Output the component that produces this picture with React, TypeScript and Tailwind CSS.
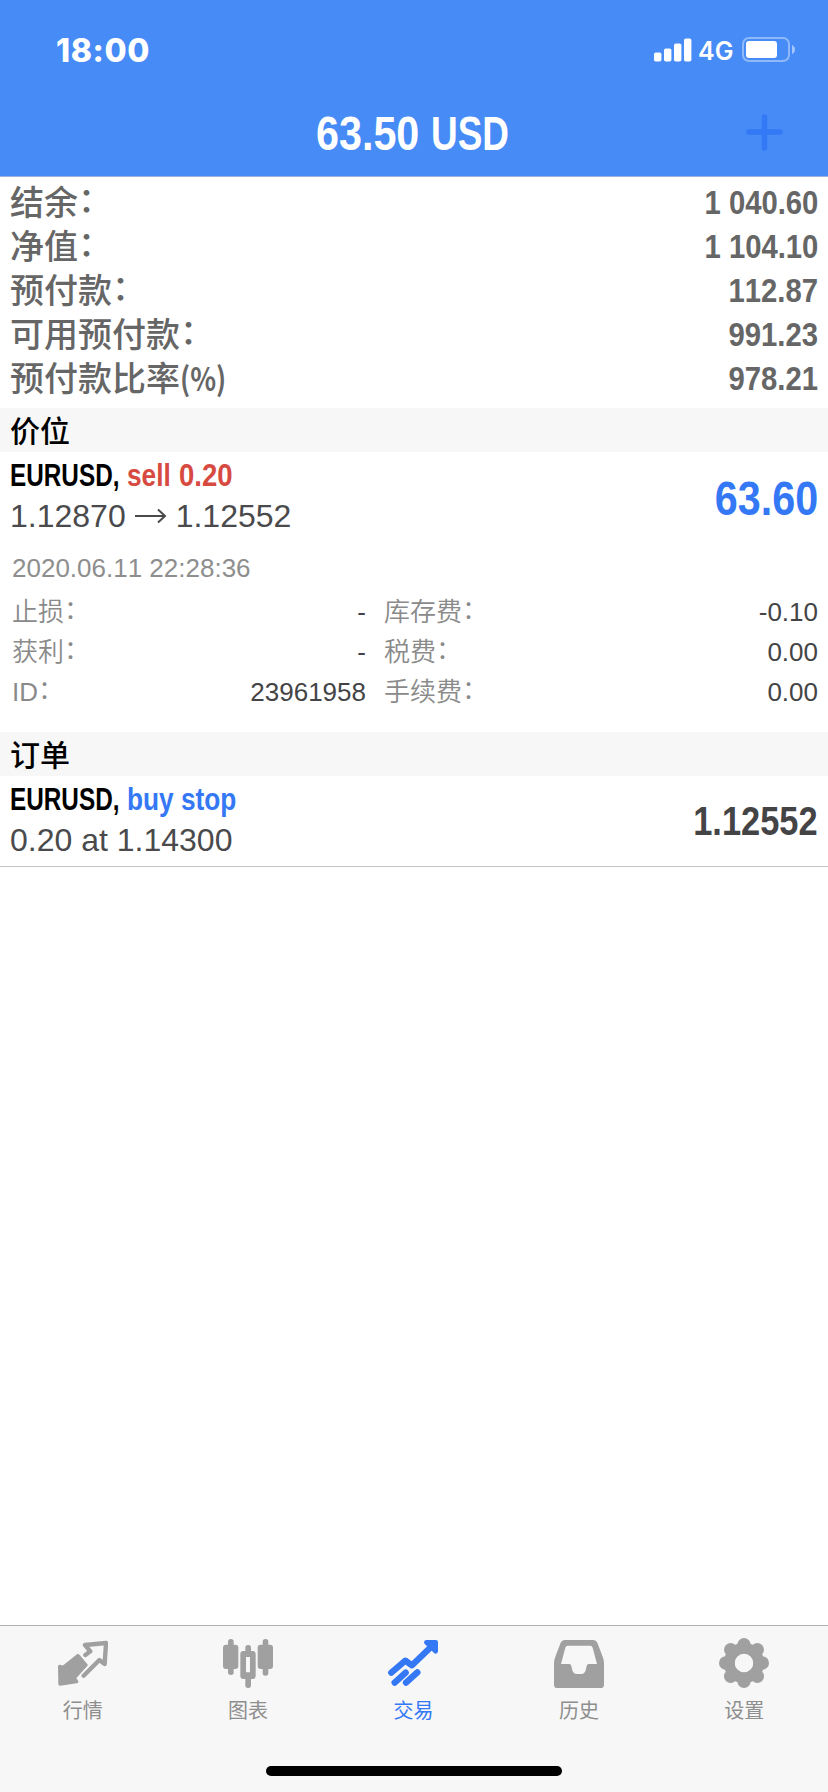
import React from "react";

type Row = {
  label: string;
  value: string;
};

const summary: Row[] = [
  { label: "结余", value: "1 040.60" },
  { label: "净值", value: "1 104.10" },
  { label: "预付款", value: "112.87" },
  { label: "可用预付款", value: "991.23" },
  { label: "预付款比率", value: "978.21" },
];

const detailsLeft: Row[] = [
  { label: "止损", value: "-" },
  { label: "获利", value: "-" },
  { label: "ID", value: "23961958" },
];

const detailsRight: Row[] = [
  { label: "库存费", value: "-0.10" },
  { label: "税费", value: "0.00" },
  { label: "手续费", value: "0.00" },
];

const QuotesIcon = () => (
  <svg className="size-[50px]" viewBox="0 0 150 150" strokeLinejoin="round" strokeLinecap="round">
    <path
      d="M5 85 L16 88 L60 53 L84 81 L49 120 L56 131 L6 138 Z"
      fill="currentColor"
      stroke="currentColor"
      strokeWidth="10"
    />
    <path
      d="M82 51 L97 40 L81 21 L144 15 L140 78 L124 66 L77 113"
      fill="none"
      stroke="currentColor"
      strokeWidth="13"
    />
  </svg>
);

const ChartIcon = () => (
  <svg className="size-[50px]" viewBox="0 0 150 150" fill="currentColor">
    <rect x="15" y="3" width="17" height="108" rx="8" />
    <rect x="0" y="20" width="46" height="73" rx="9" />
    <rect x="119" y="3" width="17" height="110" rx="8" />
    <rect x="104" y="20" width="46" height="73" rx="9" />
    <rect x="67" y="21" width="17" height="25" rx="8" />
    <rect x="67" y="112" width="17" height="38" rx="8" />
    <path
      fillRule="evenodd"
      d="M61 39h28q9 0 9 9v66q0 9-9 9H61q-9 0-9-9V48q0-9 9-9zM69 57v46h12V57z"
    />
  </svg>
);

const TradeIcon = () => (
  <svg
    className="size-[50px]"
    viewBox="0 0 150 150"
    fill="none"
    stroke="currentColor"
    strokeWidth="19"
    strokeLinejoin="round"
    strokeLinecap="round"
  >
    <path d="M10 104 L52 68 L72 82 L132 24" />
    <path d="M20 134 L53 104 M54 134 L88 103" />
    <path d="M115 13 H143 V40 Z" fill="currentColor" strokeWidth="14" />
  </svg>
);

const HistoryIcon = () => (
  <svg className="size-[50px]" viewBox="0 0 150 150" fill="currentColor">
    <path
      fillRule="evenodd"
      d="M32 6H118Q127 6 130 14L146 56Q150 66 150 75V140Q150 150 140 150H10Q0 150 0 140V75Q0 66 4 56L20 14Q23 6 32 6ZM41 23Q36 23 34 29L21 78H46Q51 78 52 84L55 97Q58 108 68 108H82Q92 108 95 97L98 84Q99 78 104 78H129L116 29Q114 23 109 23Z"
    />
  </svg>
);

const SettingsIcon = () => (
  <svg className="size-[50px]" viewBox="0 0 150 150" fill="currentColor">
    <circle cx="75" cy="75" r="44" fill="none" stroke="currentColor" strokeWidth="33" />
    <circle cx="75" cy="20" r="20" />
    <circle cx="75" cy="130" r="20" />
    <circle cx="20" cy="75" r="20" />
    <circle cx="130" cy="75" r="20" />
    <circle cx="35" cy="35" r="20" />
    <circle cx="115" cy="35" r="20" />
    <circle cx="35" cy="115" r="20" />
    <circle cx="115" cy="115" r="20" />
    <circle cx="75" cy="75" r="27" fill="#f7f7f7" />
  </svg>
);

const tabs = [
  { name: "行情", icon: <QuotesIcon /> },
  { name: "图表", icon: <ChartIcon /> },
  { name: "交易", icon: <TradeIcon />, active: true },
  { name: "历史", icon: <HistoryIcon /> },
  { name: "设置", icon: <SettingsIcon /> },
];

const StatusBar = () => (
  <div className="flex h-[100px] items-center justify-between pr-[32px] pl-[56px] text-white">
    <span className="pt-px font-[Inter,sans-serif] text-[32px] leading-none font-extrabold tracking-[0.6px]">18:00</span>
    <div className="flex items-center">
      <svg width="38" height="24" viewBox="0 0 38 24" fill="white">
        <rect x="0" y="14.5" width="7.4" height="9" rx="1.8" />
        <rect x="10" y="10.5" width="7.4" height="13" rx="1.8" />
        <rect x="20" y="5.5" width="7.4" height="18" rx="1.8" />
        <rect x="30" y="0.5" width="7.4" height="23" rx="1.8" />
      </svg>
      <span className="ml-[6px] w-[44px] pt-[3px] font-[Inter,sans-serif] text-[25px] leading-none font-semibold">4G</span>
      <svg width="54" height="26" viewBox="0 0 54 26">
        <rect x="1" y="1" width="46" height="23" rx="6" fill="none" stroke="white" strokeOpacity="0.4" strokeWidth="2" />
        <rect x="4" y="4" width="31" height="17" rx="3" fill="white" />
        <path d="M50 8 Q53 9.500 53 12.500 Q53 15.500 50 17 Z" fill="white" fillOpacity="0.5" />
      </svg>
    </div>
  </div>
);

const SectionTitle = ({ children }: { children: React.ReactNode }) => (
  <div className="flex h-11 items-center bg-[#f7f7f7] pb-[2px] pl-[10px] font-['Noto_Sans_CJK_SC',sans-serif] text-[30px] leading-none font-medium text-black">
    {children}
  </div>
);

const DetailColumn = ({ rows }: { rows: Row[] }) => (
  <>
    {rows.map((row) => (
      <div key={row.label} className="flex h-10 items-center justify-between text-[26px] leading-10">
        <span className="flex font-['Liberation_Sans','Noto_Sans_CJK_SC',sans-serif] font-[350] text-[#8a8a8a]">
          {row.label}
          <span className="-translate-y-[2px]">：</span>
        </span>
        <span className="text-[#444446]">{row.value}</span>
      </div>
    ))}
  </>
);

const App: React.FC = () => {
  return (
    <div className="flex h-[1792px] w-[828px] flex-col overflow-hidden bg-white font-['Liberation_Sans',Arial,sans-serif] [font-kerning:none]">
      <header className="h-[177px] border-b border-[#9bb0dc] bg-[#468bf6]">
        <StatusBar />
        <div className="grid h-[66px] grid-cols-[316px_1fr_83px] items-center">
          <span />
          <h1 className="flex pt-px text-[48px] leading-none font-bold whitespace-nowrap text-white">
            <span className="w-[115px] origin-left scale-x-[0.86]">63.50</span>
            <span className="w-[80px] origin-left scale-x-[0.77]">USD</span>
          </h1>
          <svg width="38" height="38" viewBox="0 0 38 38" stroke="#3378f5" strokeWidth="5.5" strokeLinecap="round">
            <path d="M19.500 3 V34 M4 18 H35" />
          </svg>
        </div>
      </header>

      <section className="h-[231px] px-[10px] pt-[3px] text-[#666666]">
        {summary.map((row, index) => (
          <div key={row.label} className="flex h-11 items-center justify-between text-[34px] leading-[44px]">
            <span className="flex -translate-y-px font-['Noto_Sans_CJK_SC',sans-serif] font-medium">
              {row.label}
              {index === summary.length - 1 ? (
                <span className="origin-left scale-x-[0.84] text-[32px] font-bold">(%)</span>
              ) : (
                <span className="-translate-y-[3px]">：</span>
              )}
            </span>
            <span className="origin-right scale-x-[0.86] font-bold">{row.value}</span>
          </div>
        ))}
      </section>

      <SectionTitle>价位</SectionTitle>
      <section className="h-[280px] px-[10px] pt-[7px]">
        <div className="flex h-[80px] items-start justify-between">
          <div>
            <div className="flex text-[32px] leading-8 font-bold whitespace-nowrap">
              <span className="w-[117px] origin-left scale-x-[0.76] text-black">EURUSD,</span>
              <span className="w-[52px] origin-left scale-x-[0.82] text-[#d64a3f]">sell</span>
              <span className="origin-left scale-x-[0.86] text-[#d64a3f]">0.20</span>
            </div>
            <div className="mt-[9px] flex items-center text-[32px] leading-8 text-[#4a4a4c]">
              <span>1.12870</span>
              <svg className="mr-[9px] ml-[8px]" width="33" height="16" viewBox="0 0 33 16" fill="none" stroke="currentColor" strokeWidth="2">
                <path d="M1 8 H31 M24 1.500 L31 8 L24 14.500" />
              </svg>
              <span>1.12552</span>
            </div>
          </div>
          <span className="origin-right scale-x-[0.86] text-[48px] leading-[80px] font-bold text-[#3478f6]">63.60</span>
        </div>
        <div className="mt-[13px] pl-[2px] text-[26px] leading-8 text-[#8e8e8e]">2020.06.11 22:28:36</div>
        <div className="mt-2 grid grid-cols-[354px_434px] gap-x-[18px] pl-[2px]">
          <div>
            <DetailColumn rows={detailsLeft} />
          </div>
          <div>
            <DetailColumn rows={detailsRight} />
          </div>
        </div>
      </section>

      <SectionTitle>订单</SectionTitle>
      <section className="flex h-[91px] justify-between border-b border-[#c4c4c6] px-[10px] pt-[7px]">
        <div>
          <div className="flex text-[32px] leading-8 font-bold whitespace-nowrap">
            <span className="w-[117px] origin-left scale-x-[0.76] text-black">EURUSD,</span>
            <span className="origin-left scale-x-[0.82] text-[#3478f6]">buy stop</span>
          </div>
          <div className="mt-[9px] text-[32px] leading-8 text-[#4a4a4c]">0.20 at 1.14300</div>
        </div>
        <span className="origin-right scale-x-[0.86] text-[40px] leading-[77px] font-bold text-[#444446]">1.12552</span>
      </section>

      <main className="flex-1" />

      <nav className="h-[167px] border-t border-[#b0b0b0] bg-[#f7f7f7]">
        <div className="grid h-[140px] grid-cols-5 pt-3 pr-px">
          {tabs.map((tab) => (
            <div
              key={tab.name}
              className={`flex flex-col items-center ${tab.active ? "text-[#3478f6]" : "text-[#a0a0a0]"}`}
            >
              {tab.icon}
              <span
                className={`mt-[10px] font-['Noto_Sans_CJK_SC',sans-serif] text-[20px] leading-6 ${tab.active ? "" : "text-[#8e8e8e]"}`}
              >
                {tab.name}
              </span>
            </div>
          ))}
        </div>
        <div className="mx-auto h-[10px] w-[296px] rounded-full bg-black" />
      </nav>
    </div>
  );
};

export default App;
